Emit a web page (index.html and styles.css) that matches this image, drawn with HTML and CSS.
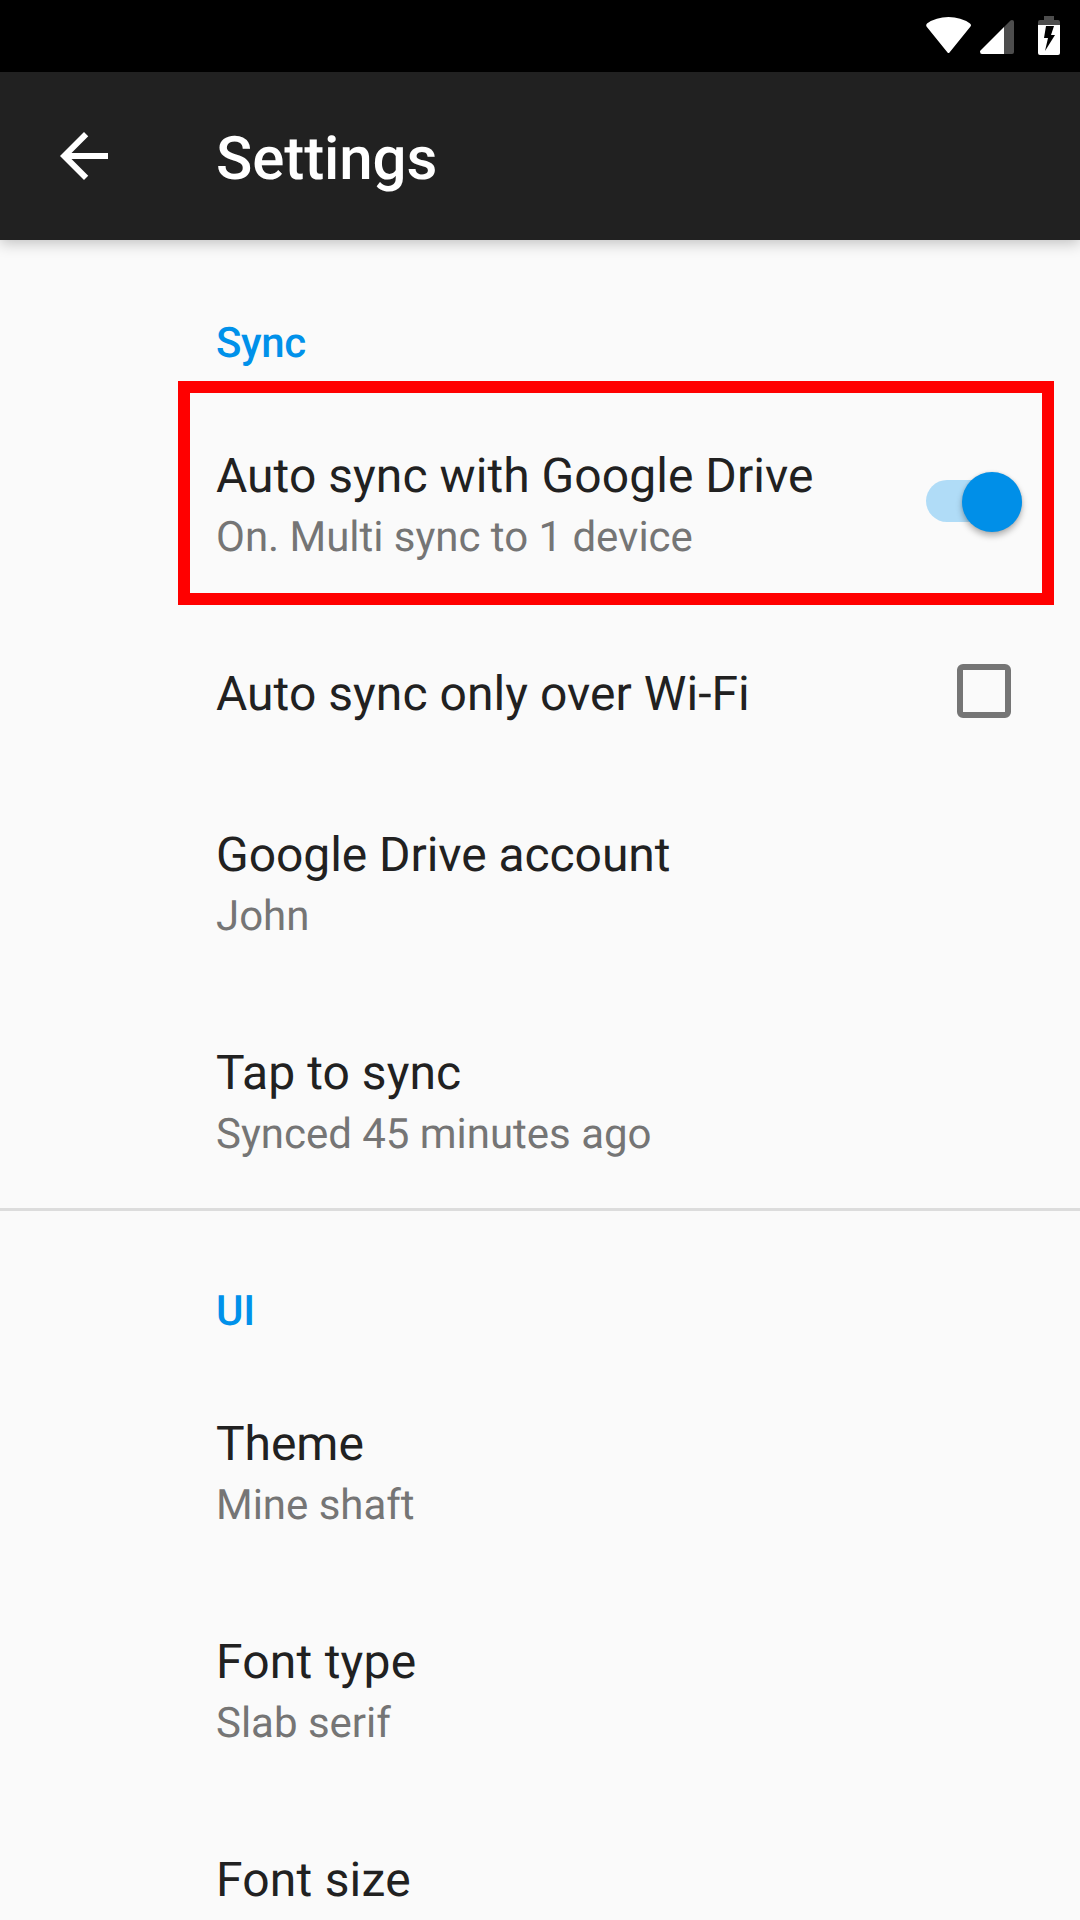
FILE: index.html
```html
<!DOCTYPE html>
<html lang="en"><head><meta charset="utf-8"><title>Settings</title><link rel="stylesheet" href="styles.css"></head>
<body>
<div class="status">
<svg class="status-icons" width="160" height="72" viewBox="920 0 160 72">
<path fill="#fff" d="M926.500 26.500Q925.500 25 927 23.500Q936 17 948.500 17Q961 17 970 23.500Q972 25 970.500 26.500L949.500 52.500Q948.500 53.500 947.500 52.500Z"/>
<path fill="#4d4d4d" d="M1004 27L1010.500 20.500Q1011 20 1012 20Q1014 20 1014 22V52Q1014 54 1012 54H1004Z"/><path fill="#fff" d="M1004 27V54H982Q980 54 980 51.500Q980 51 980.500 50.500Z"/>
<path fill="#4d4d4d" d="M1044 16h10v4h4q2 0 2 2v3h-22v-3q0-2 2-2h4z"/><path fill="#fff" d="M1038 25h22v28q0 2-2 2h-18q-2 0-2-2z"/><path fill="#000" d="M1046 26h8l-3 9h4l-10 16 3-13h-4z"/>
</svg></div>
<header class="bar"><svg class="back" width="48" height="48" viewBox="4 4 16 16"><path d="M20 11H7.830l5.590-5.590L12 4l-8 8 8 8 1.410-1.410L7.830 13H20v-2z" fill="#fff"/></svg><h1 class="title">Settings</h1></header>
<main>
<section class="group"><h2 class="heading">Sync</h2>
<div class="row marked"><div><div class="name">Auto sync with Google Drive</div><div class="sub">On. Multi sync to 1 device</div></div><div class="switch"><div class="thumb"></div></div></div>
<div class="row single"><div class="name">Auto sync only over Wi-Fi</div><div class="check"></div></div>
<div class="row"><div><div class="name tight">Google Drive account</div><div class="sub">John</div></div></div>
<div class="row"><div><div class="name">Tap to sync</div><div class="sub">Synced 45 minutes ago</div></div></div>
</section>
<section class="group second"><h2 class="heading">UI</h2>
<div class="row"><div><div class="name tight">Theme</div><div class="sub">Mine shaft</div></div></div>
<div class="row"><div><div class="name loose">Font type</div><div class="sub">Slab serif</div></div></div>
<div class="row"><div><div class="name loose">Font size</div></div></div>
</section></main></body></html>
```
FILE: styles.css
```css
*,*::after{box-sizing:border-box}
body{margin:0;width:1080px;height:1920px;overflow:hidden;background:#fafafa;font-family:Roboto,sans-serif;color:#212121;text-rendering:geometricPrecision}
.status{height:72px;background:#000;display:flex;justify-content:flex-end}
.bar{height:168px;background:#212121;display:flex;align-items:center;padding-left:60px;box-shadow:0 3px 14px rgba(0,0,0,.24)}
.title{margin:6px 0 0 108px;color:#fff;font-size:60px;line-height:70px;font-weight:500;letter-spacing:-.1px}
.group{padding:72px 0 9px}
.heading{margin:0;padding:8px 0 0 216px;height:72px;font-size:42px;line-height:48px;font-weight:500;letter-spacing:-.35px;color:#0091ea}
.row{height:218px;padding:64px 58px 0 216px;display:flex;justify-content:space-between;align-items:flex-start}
.name{font-size:48px;line-height:56px;letter-spacing:.05px}
.tight{letter-spacing:-.06px}
.loose{letter-spacing:.22px}
.sub{font-size:42px;line-height:50px;margin-top:9px;letter-spacing:-.02px;color:#757575}
.marked{position:relative}
.marked::after{content:"";position:absolute;left:178px;top:-3px;width:876px;height:224px;border:12px solid #f00}
.single{height:161px}
.switch{width:96px;height:42px;border-radius:21px;background:#b0dcf7;margin-top:32px;display:flex;align-items:center;justify-content:flex-end}
.thumb{width:60px;height:60px;margin:1px .5px 0 0;flex:none;border-radius:50%;background:#008fe8;box-shadow:0 4px 6px rgba(0,0,0,.28),0 0 3px rgba(0,0,0,.12)}
.check{width:54px;height:54px;border:6px solid #757575;border-radius:6px;margin:-2px 11px 0 0}
.second{border-top:3px solid #dcdcdc;padding-top:69px}
```
